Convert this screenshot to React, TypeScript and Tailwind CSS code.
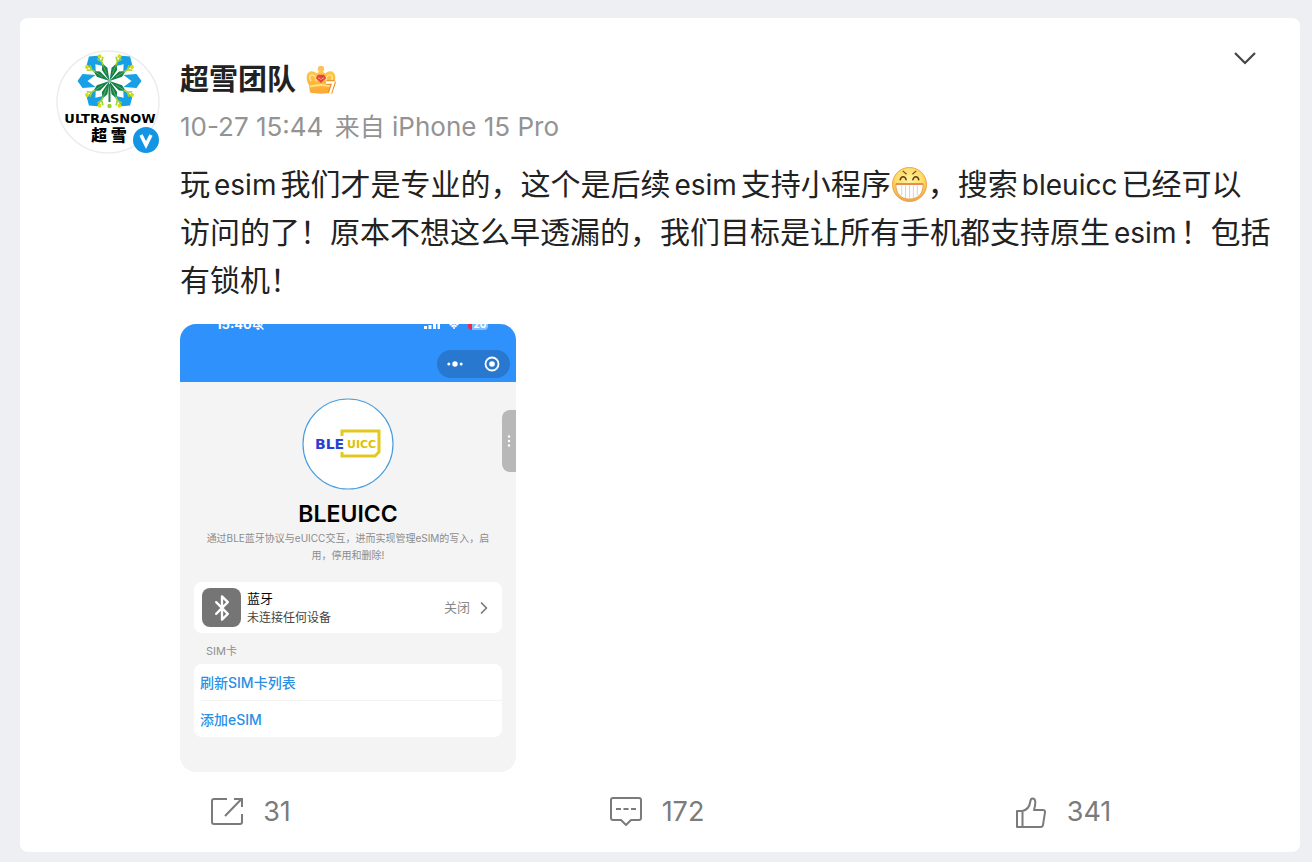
import type { ReactNode } from 'react';
import { ChevronRight, Bluetooth, BellOff, Wifi } from 'lucide-react';

interface Action {
  id: string;
  label: string;
  count: number;
  icon: ReactNode;
}

const ARM_ANGLES = [22, 58, 122, 158, 202, 238, 302, 338];
const PETAL_ANGLES = [40, 90, 140, 220, 270, 320];

const ShareIcon = () => (
  <svg className="w-8 h-8" viewBox="0 0 32 32" fill="none" stroke="currentColor" strokeWidth={2} strokeLinejoin="round">
    <path d="M16 3H3a2 2 0 0 0-2 2v21a2 2 0 0 0 2 2h26a2 2 0 0 0 2-2v-8" />
    <path d="M14 20 30 3.500M23 3h8v8" strokeLinejoin="miter" />
  </svg>
);

const CommentIcon = () => (
  <svg className="w-8 h-8" viewBox="0 0 32 32" fill="none" stroke="currentColor" strokeWidth={2} strokeLinejoin="round">
    <path d="M3 2h26a2 2 0 0 1 2 2v18a2 2 0 0 1-2 2h-8l-5 5-5-5H3a2 2 0 0 1-2-2V4a2 2 0 0 1 2-2z" />
    <path d="M6 13h5M13.500 13h5M21 13h5" />
  </svg>
);

const LikeIcon = () => (
  <svg className="w-8 h-8" viewBox="0 0 32 32" fill="none" stroke="currentColor" strokeWidth={2} strokeLinejoin="round">
    <path d="M2 15h5.500v16H2zM7.500 15c4-1 7-4 7.700-9C15.500 3.500 16 2.500 17.500 2.500c2 0 2.800 1.500 2.800 4 0 2.500-.5 5-1.300 7.500h9c1.400 0 2.200 1 2 2.300l-2 12.500c-.2 1.400-1 2.200-2.400 2.200H7.500" />
  </svg>
);

const CrownIcon = () => (
  <svg className="w-[30px] h-[30px]" viewBox="0 0 30 30">
    <defs>
      <linearGradient id="crown" x1="0" y1="0" x2="0" y2="1">
        <stop offset="0" stopColor="#ffc648" />
        <stop offset="1" stopColor="#fba836" />
      </linearGradient>
    </defs>
    <circle cx="15" cy="4" r="3.200" fill="#fdc35a" />
    <path d="M4 27.500 3 20C0 16-.5 8 4 6.500c3-.9 5.500 1 7 2 1-2.500 7-2.500 8 0 1.500-1 4-2.900 7-2 4.500 1.500 4 9.500 1 13.500l-1 7.500c-6 1.500-16 1.500-22 0z" fill="url(#crown)" />
    <path d="M5 16C2.500 12.500 4 10 6 10c3 0 4 3.500 4 6M25 16c2.500-3.500 1-6-1-6-3 0-4 3.500-4 6" fill="none" stroke="#ffe58f" strokeWidth={1.500} />
    <path d="M4 21.500c7-2 15-2 22 0" fill="none" stroke="#ffe27a" strokeWidth={2} />
    <path d="m15 18-5.200-5 2.200-3.200h6l2.200 3.200z" fill="#e5443f" />
    <path d="m12 12.500 3 2 3-2" fill="none" stroke="#ffa08d" />
    <path d="M20.500 17.500h7L24 28" fill="none" stroke="#ee8a20" strokeWidth={4.500} strokeLinejoin="round" />
    <path d="M20 17.500h7.500L24 28.500" fill="none" stroke="#fff" strokeWidth={2.400} />
  </svg>
);

const GrinIcon = () => (
  <svg className="inline-block w-[37px] h-[37px] align-[-8px]" viewBox="0 0 38 38" role="img" aria-label="[嘻嘻]">
    <defs>
      <radialGradient id="grin" cx=".5" cy=".4" r=".6">
        <stop offset="0" stopColor="#fff3a0" />
        <stop offset=".7" stopColor="#fddb62" />
        <stop offset="1" stopColor="#eda03c" />
      </radialGradient>
    </defs>
    <circle cx="19" cy="19" r="17.500" fill="url(#grin)" stroke="#eda648" />
    <path d="m12 5 4 3.500M26 5l-4 3.500" stroke="#7d4a1e" strokeWidth={1.300} fill="none" />
    <path d="M9.500 14c1-4 5-4 6 0M22.500 14c1-4 5-4 6 0" stroke="#633716" strokeWidth={1.600} fill="none" strokeLinecap="round" />
    <path d="M5 18h28c.5 10-5 16-14 16S4.500 28 5 18z" fill="#fff" stroke="#e59a50" strokeWidth={1} />
    <path d="M5 18.500h28" stroke="#e98a55" strokeWidth={2} />
    <path d="M11 20v10M15 20v13M19 20v13M23 20v13M27 20v10" stroke="#d8d3cc" strokeWidth={1} />
  </svg>
);

const TeamLogo = () => (
  <svg className="w-full h-full" viewBox="0 0 104 104" role="img" aria-label="ULTRASNOW 超雪">
    <circle cx="52" cy="52" r="51" fill="#fff" stroke="#ececec" strokeWidth={1.500} />
    <g transform="translate(53.500 31)">
      {PETAL_ANGLES.map((angle) => (
        <g key={angle} transform={`rotate(${angle})`}>
          <path d="M0-32 7-27 6-14 0-22-6-14-7-27z" fill="#17a0e6" />
        </g>
      ))}
      {ARM_ANGLES.map((angle) => (
        <g key={angle} transform={`rotate(${angle})`}>
          <path d="M0 0-3-13 0-19 3-13z" fill="#14804f" />
          <path d="M0-8V-18" stroke="#63b545" strokeWidth={0.800} />
          <path d="m-3-25 3 4 3-4M0-21v4" stroke="#a4d22c" strokeWidth={1.600} fill="none" />
          <circle cy="-26.500" r="2" fill="#d3dc14" />
        </g>
      ))}
      <path d="M0 3v18" stroke="#24864c" strokeWidth={2} />
      <circle cy="25" r="2.200" fill="#9ccf2a" />
    </g>
    <text x="54" y="73" textAnchor="middle" fontSize="13" className="font-['DejaVu_Sans',sans-serif] font-bold">
      ULTRASNOW
    </text>
    <text x="53" y="91" textAnchor="middle" fontSize="16" className="font-['Noto_Sans_CJK_SC',sans-serif] font-black">
      超 雪
    </text>
  </svg>
);

const BleuiccLogo = () => (
  <svg className="w-[92px] h-[92px]" viewBox="0 0 92 92" role="img" aria-label="BLEUICC">
    <circle cx="46" cy="46" r="45" fill="#fff" stroke="#4a9fe0" strokeWidth={1.200} />
    <path d="M40 38v-5h37v21l-4 4H40v-4" fill="none" stroke="#e3c91f" strokeWidth={3} />
    <text x="13" y="51" fontSize="14" fill="#2b3fd3" className="font-['DejaVu_Sans',sans-serif] font-bold">
      BLE
    </text>
    <text x="45" y="50" fontSize="11" fill="#e0c000" className="font-['DejaVu_Sans',sans-serif] font-bold">
      UICC
    </text>
  </svg>
);

const actions: Action[] = [
  { id: 'repost', label: '转发', count: 31, icon: <ShareIcon /> },
  { id: 'comment', label: '评论', count: 172, icon: <CommentIcon /> },
  { id: 'like', label: '赞', count: 341, icon: <LikeIcon /> },
];

function Latin({ children }: { children: ReactNode }) {
  return <span className="mx-1 text-[28px] leading-none">{children}</span>;
}

// 小程序截图
function MiniProgram() {
  return (
    <div className="relative w-[336px] pb-[35px] rounded-2xl overflow-hidden bg-[#f4f4f4] font-['Inter','Noto_Sans_CJK_SC',sans-serif]">
      <div className="bg-[#2f92fc] text-white pb-1">
        <div className="flex items-end justify-between h-[6px] pl-9 pr-7 overflow-hidden">
          <div className="flex items-end text-[13px] leading-3 font-bold">
            15:40
            <BellOff className="w-3 h-3" strokeWidth={3} />
          </div>
          <div className="flex items-end gap-2">
            <svg className="w-4 h-3" viewBox="0 0 16 12" fill="currentColor">
              <path d="M0 8h3v3H0zM4.500 7h3v4h-3zM9 6h3v5H9zM13.500 5h2.500v6h-2.500z" />
            </svg>
            <Wifi className="w-3 h-3" strokeWidth={4} />
            <span className="w-5 rounded-sm border-l-4 border-[#f02849] bg-white/40 text-[10px] leading-3 font-bold text-center">20</span>
          </div>
        </div>
        <div className="flex justify-end pt-5 pr-[6px]">
          <div className="flex items-center justify-around w-[73px] h-7 rounded-full bg-[#2878cf]">
            <button aria-label="更多">
              <svg className="w-4 h-4" viewBox="0 0 16 16" fill="currentColor">
                <circle cx="1.800" cy="8" r="1.500" />
                <circle cx="8" cy="8" r="2.700" />
                <circle cx="14.200" cy="8" r="1.500" />
              </svg>
            </button>
            <button aria-label="关闭小程序">
              <svg className="w-4 h-4" viewBox="0 0 16 16">
                <circle cx="8" cy="8" r="6.500" fill="none" stroke="currentColor" strokeWidth={1.800} />
                <circle cx="8" cy="8" r="2.800" fill="currentColor" />
              </svg>
            </button>
          </div>
        </div>
      </div>

      <div className="flex flex-col items-center pt-4">
        <BleuiccLogo />
        <h2 className="mt-2 text-[23px] leading-8 font-semibold text-black">BLEUICC</h2>
        <p className="px-5 text-[10px] leading-[17px] text-center text-[#8c8c8c]">
          通过BLE蓝牙协议与eUICC交互，进而实现管理eSIM的写入，启用，停用和删除!
        </p>
      </div>

      <div className="mx-[14px] mt-[18px]">
        <button className="flex items-center w-full h-[51px] px-2 rounded-lg bg-white text-left">
          <span className="flex items-center justify-center w-[39px] h-[39px] rounded-lg bg-[#757575]">
            <Bluetooth className="w-7 h-7 text-white" strokeWidth={2} />
          </span>
          <span className="ml-[6px] grow">
            <span className="block text-[13px] leading-5 text-black">蓝牙</span>
            <span className="block text-[12px] leading-5 text-[#444]">未连接任何设备</span>
          </span>
          <span className="text-[13px] text-[#888]">关闭</span>
          <ChevronRight className="w-5 h-5 ml-1 text-[#777]" />
        </button>
        <div className="pl-3 pt-2 pb-[3px] text-[11px] leading-5 text-[#8f8f8f]">SIM卡</div>
        <div className="rounded-lg bg-white text-[14px] font-medium text-[#2a8fe6]">
          <button className="block w-full h-9 px-[6px] text-left">刷新SIM卡列表</button>
          <div className="ml-[7px] border-t border-[#f3f3f3]" />
          <button className="block w-full h-9 px-[6px] text-left">添加eSIM</button>
        </div>
      </div>

      {/* 侧边悬浮把手 */}
      <div className="absolute right-0 top-[86px] flex items-center justify-center w-[14px] h-[62px] rounded-l-lg bg-[#b8b8b8]">
        <svg className="w-1 h-3" viewBox="0 0 4 12" fill="#fff">
          <circle cx="2" cy="1.500" r="1.200" />
          <circle cx="2" cy="6" r="1.200" />
          <circle cx="2" cy="10.500" r="1.200" />
        </svg>
      </div>
    </div>
  );
}

export default function App() {
  return (
    <div className="min-h-screen bg-[#eeeff3] pl-5 pr-3 pt-[18px] pb-[10px] font-['Inter','Noto_Sans_CJK_SC',sans-serif]">
      <article className="rounded-lg bg-white pb-5">
        <div className="flex gap-5 pl-9 pr-6">
          <div className="relative shrink-0 w-[104px] h-[104px] mt-8">
            <TeamLogo />
            {/* 认证标志 */}
            <svg className="absolute right-0 bottom-0 w-7 h-7" viewBox="0 0 28 28">
              <circle cx="14" cy="14" r="13" fill="#1494e4" />
              <path d="m9 9 5 10 5-10" fill="none" stroke="#fff" strokeWidth={3.500} />
            </svg>
          </div>

          <div className="grow min-w-0 pt-10">
            <header className="flex justify-between">
              <div>
                <div className="flex items-center gap-[10px] h-11">
                  <h1 className="text-[29px] font-bold text-[#222]">超雪团队</h1>
                  <CrownIcon />
                </div>
                <div className="text-[26px] leading-[50px] text-[#939393]">
                  10-27 15:44 <span className="ml-1 text-[25px] leading-none">来自</span> iPhone 15 Pro
                </div>
              </div>
              <button aria-label="更多" className="self-start flex items-center h-10 mr-5 -mt-5 text-[#444]">
                <svg className="w-[22px] h-4" viewBox="0 0 22 16" fill="none" stroke="currentColor" strokeWidth={2.2}>
                  <path d="m1 3 10 10L21 3" />
                </svg>
              </button>
            </header>

            <p className="mt-2 text-[30px] leading-[48px] text-[#222]">
              玩<Latin>esim</Latin>我们才是专业的，这个是后续<Latin>esim</Latin>支持小程序<GrinIcon />，搜索<Latin>bleuicc</Latin>已经可以
              <br />
              访问的了！原本不想这么早透漏的，我们目标是让所有手机都支持原生<Latin>esim</Latin>！包括
              <br />
              有锁机！
            </p>

            <div className="mt-5">
              <MiniProgram />
            </div>
          </div>
        </div>

        <footer className="grid grid-cols-3 pl-7 pr-[34px] pt-5">
          {actions.map((action) => (
            <button key={action.id} aria-label={action.label} className="flex items-center justify-center gap-5 h-10 text-[27px] text-[#7b7b7b]">
              {action.icon}
              <span>{action.count}</span>
            </button>
          ))}
        </footer>
      </article>
    </div>
  );
}
